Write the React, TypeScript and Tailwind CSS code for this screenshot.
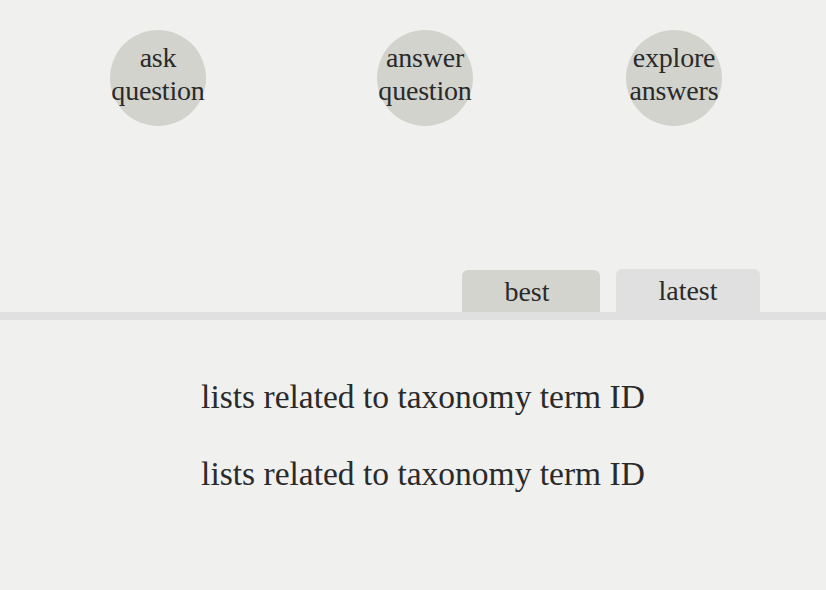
export default function App() {
  const serif = { fontFamily: '"Liberation Serif", "DejaVu Serif", serif' };
  const circle =
    "w-[96px] h-[96px] rounded-full bg-[#d3d3cd] flex flex-col items-center justify-center text-[28px] leading-[33px] tracking-[-0.2px] pb-[8px] whitespace-nowrap";
  return (
    <div className="w-[826px] h-[590px] bg-[#f0f0ee] text-[#2a2a2a] overflow-hidden" style={serif}>
      <div className="flex pt-[30px] h-[269px] items-start">
        <div className={"ml-[110px] " + circle}>
          <span>ask</span>
          <span>question</span>
        </div>
        <div className={"ml-[171px] " + circle}>
          <span>answer</span>
          <span>question</span>
        </div>
        <div className={"ml-[153px] " + circle}>
          <span>explore</span>
          <span>answers</span>
        </div>
      </div>
      <div className="flex justify-end items-end pr-[66px] gap-[16px] h-[43px]">
        <div className="w-[138px] h-[42px] rounded-t-[6px] bg-[#d4d4ce] flex items-center justify-center text-[28px] pt-[1px] pr-[8px]">best</div>
        <div className="w-[144px] h-[43px] rounded-t-[6px] bg-[#e0e0e0] flex items-center justify-center text-[28px] pt-[1px]">latest</div>
      </div>
      <div className="h-[8px] bg-[#e0e0e0]" />
      <div className="flex flex-col items-center pt-[58px] pl-[20px] gap-[39px] text-[33.5px] leading-[38px]">
        <div>lists related to taxonomy term ID</div>
        <div>lists related to taxonomy term ID</div>
      </div>
    </div>
  );
}
